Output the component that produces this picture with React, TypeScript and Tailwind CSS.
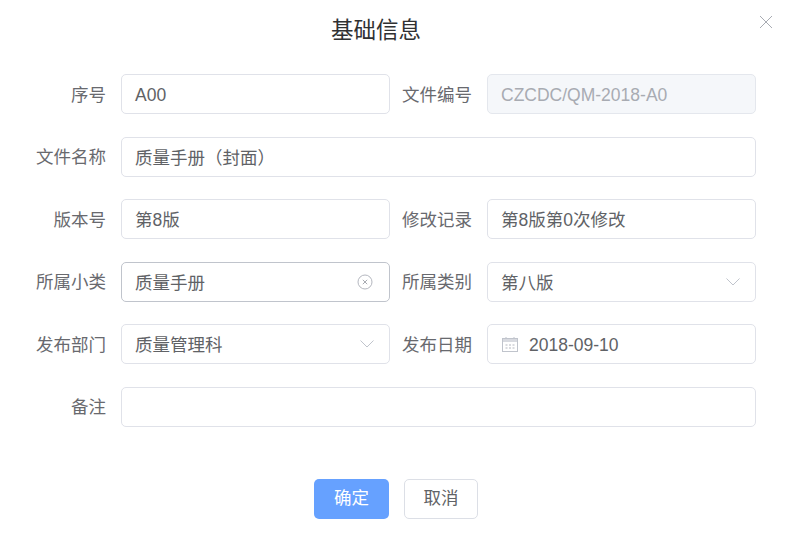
import React from "react";

const Field = ({
  label,
  labelWidth,
  children,
  className = "",
}: {
  label: string;
  labelWidth: string;
  children: React.ReactNode;
  className?: string;
}) => (
  <div className={`flex h-10 items-center ${className}`}>
    <label className={`${labelWidth} shrink-0 pr-[15px] pt-[2px] text-right text-[17.5px] text-[#68696e]`}>
      {label}
    </label>
    {children}
  </div>
);

const Box = ({
  children,
  className = "border-[#e0e2e9] bg-white text-[#606266]",
}: {
  children?: React.ReactNode;
  className?: string;
}) => (
  <div className={`flex h-10 flex-1 items-center rounded-[5px] border pl-[13px] pr-[14px] text-[17.5px] ${className}`}>
    {children}
  </div>
);

const Chevron = () => (
  <svg width="16" height="16" viewBox="0 0 16 16" fill="none" className="ml-auto shrink-0">
    <path d="M1.5 4.5 L8 11 L14.5 4.5" stroke="#c0c4cc" strokeWidth="1" />
  </svg>
);

const ClearIcon = () => (
  <svg width="16" height="16" viewBox="0 0 16 16" fill="none" className="ml-auto mr-[2px] shrink-0">
    <circle cx="8" cy="8" r="7" stroke="#b4b7bf" strokeWidth="1" />
    <path d="M5.8 5.8 L10.2 10.2 M10.2 5.8 L5.8 10.2" stroke="#a8abb2" strokeWidth="1" />
  </svg>
);

const CalendarIcon = () => (
  <svg width="16" height="16" viewBox="0 0 16 16" fill="none" className="ml-px mr-[11px] shrink-0">
    <rect x="0.5" y="2.5" width="15" height="13" stroke="#c0c4cc" />
    <rect x="1" y="3" width="14" height="3" fill="#d8dae0" />
    <path d="M4 1 V3 M12 1 V3" stroke="#c0c4cc" />
    <path d="M3.5 9 H5.5 M7 9 H9 M10.5 9 H12.5 M3.5 12 H5.5 M7 12 H9 M10.5 12 H12.5" stroke="#b4b7bf" />
  </svg>
);

const LEFT = "w-[85px]";
const RIGHT = "w-[97px]";

export default function App() {
  return (
    <div
      className="relative h-[534px] w-[792px] overflow-hidden bg-white"
      style={{ fontFamily: '"Liberation Sans", "Noto Sans CJK SC", sans-serif' }}
    >
      <div className="flex h-[74px] justify-center pr-[40px] pt-[15px]">
        <h2 className="text-[22.5px] leading-[32px] font-normal text-[#303133]">基础信息</h2>
      </div>
      <button className="absolute left-[760px] top-[16px]">
        <svg width="12" height="12" viewBox="0 0 12 12" fill="none" className="block">
          <path d="M0 0 L12 12 M12 0 L0 12" stroke="#a8abb2" strokeWidth="1" />
        </svg>
      </button>

      <form className="flex flex-col gap-[22.5px] pl-[36px] pr-[36px]">
        <div className="flex">
          <Field label="序号" labelWidth={LEFT} className="w-[354px]">
            <Box><span className="pt-[2px]">A00</span></Box>
          </Field>
          <Field label="文件编号" labelWidth={RIGHT} className="w-[366px]">
            <Box className="border-[#e4e7ed] bg-[#f5f7fa] text-[#a8abb2]"><span className="pt-[2px]">CZCDC/QM-2018-A0</span></Box>
          </Field>
        </div>
        <Field label="文件名称" labelWidth={LEFT}>
          <Box><span className="pt-[3px]">质量手册（封面）</span></Box>
        </Field>
        <div className="flex">
          <Field label="版本号" labelWidth={LEFT} className="w-[354px]">
            <Box><span className="pt-[2px]">第8版</span></Box>
          </Field>
          <Field label="修改记录" labelWidth={RIGHT} className="w-[366px]">
            <Box><span className="pt-[2px]">第8版第0次修改</span></Box>
          </Field>
        </div>
        <div className="flex">
          <Field label="所属小类" labelWidth={LEFT} className="w-[354px]">
            <Box className="border-[#c0c4cc] bg-white text-[#606266]">
              <span className="pt-[3px]">质量手册</span>
              <ClearIcon />
            </Box>
          </Field>
          <Field label="所属类别" labelWidth={RIGHT} className="w-[366px]">
            <Box>
              <span className="pt-[3px]">第八版</span>
              <Chevron />
            </Box>
          </Field>
        </div>
        <div className="flex">
          <Field label="发布部门" labelWidth={LEFT} className="w-[354px]">
            <Box>
              <span className="pt-[3px]">质量管理科</span>
              <Chevron />
            </Box>
          </Field>
          <Field label="发布日期" labelWidth={RIGHT} className="w-[366px]">
            <Box>
              <CalendarIcon />
              <span className="pt-[2px]">2018-09-10</span>
            </Box>
          </Field>
        </div>
        <Field label="备注" labelWidth={LEFT}>
          <Box />
        </Field>
      </form>

      <div className="mt-[52px] flex justify-center gap-[15px]">
        <button className="h-10 w-[75px] rounded-[5px] bg-[#66a1ff] text-[17.5px] text-white">确定</button>
        <button className="h-10 w-[74px] rounded-[5px] border border-[#dcdfe6] bg-white text-[17.5px] text-[#606266]">
          取消
        </button>
      </div>
    </div>
  );
}
